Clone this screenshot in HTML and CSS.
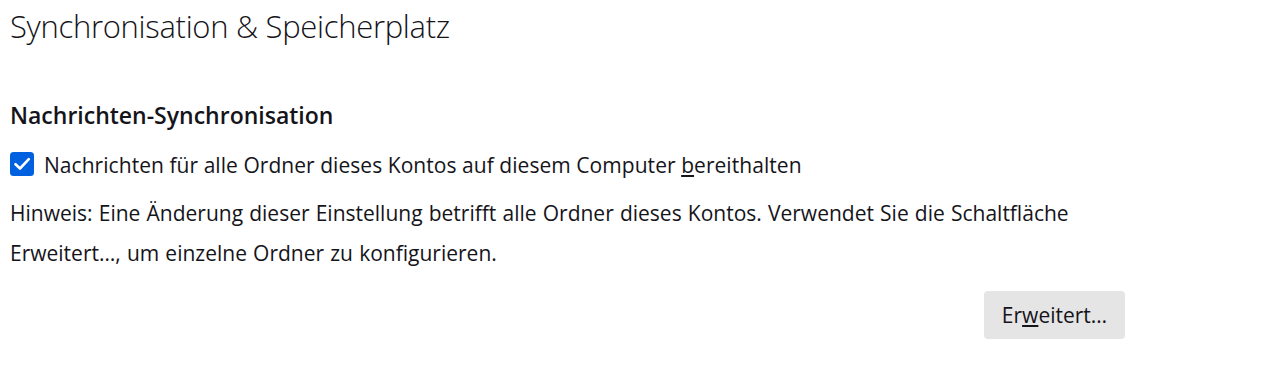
FILE: index.html
```html
<!DOCTYPE html>
<html lang="de">
<head>
<meta charset="utf-8">
<title>Synchronisation &amp; Speicherplatz</title>
<link rel="stylesheet" href="styles.css">
</head>
<body>
<main class="page">
  <h1 class="title">Synchronisation &amp; Speicherplatz</h1>
  <h2 class="section">Nachrichten-Synchronisation</h2>
  <label class="check-row">
    <span class="checkbox">
      <svg viewBox="0 0 24 24" width="24" height="24" aria-hidden="true">
        <rect x="0" y="0" width="24" height="24" rx="3.5" fill="#0061e0"/>
        <path d="M5.5 12.2 L10 16.5 L18.8 7.2" fill="none" stroke="#fff" stroke-width="2.6" stroke-linecap="round" stroke-linejoin="round"/>
      </svg>
    </span>
    <span class="check-label">Nachrichten für alle Ordner dieses Kontos auf diesem Computer <u>b</u>ereithalten</span>
  </label>
  <p class="note">Hinweis: Eine Änderung dieser Einstellung betrifft alle Ordner dieses Kontos. Verwendet Sie die Schaltfläche Erweitert…, um einzelne Ordner zu konfigurieren.</p>
  <div class="actions">
    <button class="btn" type="button">Er<u>w</u>eitert…</button>
  </div>
</main>
</body>
</html>
```
FILE: styles.css
```css
html, body {
  margin: 0;
  padding: 0;
  background: #ffffff;
}

body {
  font-family: "Open Sans", "Noto Sans", "Liberation Sans", sans-serif;
  color: #15141a;
}

.page {
  width: 1115px;
  padding: 0 0 0 10px;
}

.title {
  margin: 6px 0 0;
  font-size: 31px;
  font-weight: 300;
  line-height: 40px;
  letter-spacing: -0.3px;
}

.section {
  margin: 54px 0 0;
  font-size: 23px;
  font-weight: 600;
  line-height: 30px;
}

.check-row {
  display: flex;
  align-items: center;
  gap: 10px;
  margin-top: 20px;
  height: 30px;
  font-size: 21px;
  line-height: 30px;
  letter-spacing: 0.05px;
}

.checkbox {
  display: flex;
  width: 24px;
  height: 24px;
  margin-top: -2px;
}

.note {
  margin: 13px 0 0;
  font-size: 21px;
  line-height: 40px;
  word-spacing: 0.7px;
}

.actions {
  display: flex;
  justify-content: flex-end;
  margin-top: 18px;
}

.btn {
  width: 141px;
  height: 48px;
  border: none;
  border-radius: 4px;
  background: #e5e5e5;
  color: #15141a;
  font-family: inherit;
  font-size: 21px;
  padding: 0;
}
```
